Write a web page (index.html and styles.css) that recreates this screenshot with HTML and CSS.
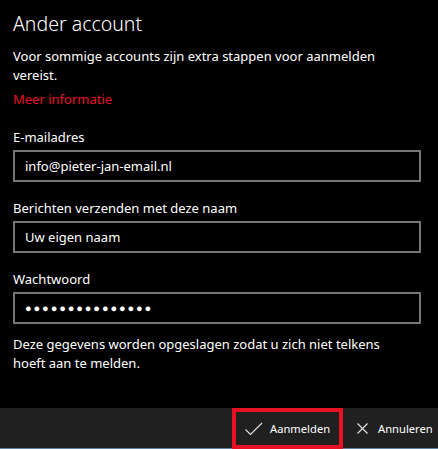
FILE: index.html
```html
<!DOCTYPE html>
<html lang="nl">
<head>
<meta charset="utf-8">
<title>Ander account</title>
<link rel="stylesheet" href="styles.css">
</head>
<body>
<div class="dialog">
  <main class="content">
    <h1 class="title">Ander account</h1>
    <p class="intro">Voor sommige accounts zijn extra stappen voor aanmelden vereist.</p>
    <a class="link" href="#">Meer informatie</a>
    <div class="field">
      <label class="label">E-mailadres</label>
      <div class="input">info@pieter-jan-email.nl</div>
    </div>
    <div class="field">
      <label class="label">Berichten verzenden met deze naam</label>
      <div class="input">Uw eigen naam</div>
    </div>
    <div class="field">
      <label class="label">Wachtwoord</label>
      <div class="input password">●●●●●●●●●●●●●●●</div>
    </div>
    <p class="note">Deze gegevens worden opgeslagen zodat u zich niet telkens hoeft aan te melden.</p>
  </main>
  <footer class="bar">
    <button class="btn btn-primary">
      <svg class="icon" width="18" height="14" viewBox="0 0 18 14"><path d="M0.5 7.5 L5.5 12.5 L17 1" fill="none" stroke="#e6e6e6" stroke-width="1.1"/></svg>
      <span>Aanmelden</span>
    </button>
    <button class="btn btn-cancel">
      <svg class="icon" width="11" height="11" viewBox="0 0 11 11"><path d="M0.5 0.5 L10.5 10.5 M10.5 0.5 L0.5 10.5" fill="none" stroke="#e6e6e6" stroke-width="1.1"/></svg>
      <span>Annuleren</span>
    </button>
  </footer>
</div>
</body>
</html>
```
FILE: styles.css
```css
* { box-sizing: border-box; }
html, body {
  margin: 0;
  padding: 0;
  background: #000;
}
body {
  width: 438px;
  height: 449px;
  overflow: hidden;
  font-family: "Noto Sans", "Open Sans", sans-serif;
  color: #fff;
}
.dialog {
  display: flex;
  flex-direction: column;
  height: 449px;
}
.content {
  flex: 1;
  padding: 10px 17px 0 13px;
  display: flex;
  flex-direction: column;
}
.title {
  margin: 0;
  font-size: 19.5px;
  font-weight: 300;
  line-height: 28px;
  color: #fff;
}
.intro {
  margin: 9px 0 0;
  font-size: 13px;
  line-height: 19px;
}
.link {
  margin-top: 5px;
  font-size: 13px;
  line-height: 19px;
  color: #e81123;
  text-decoration: none;
}
.field {
  display: flex;
  flex-direction: column;
  margin-top: 19px;
}
.field + .field { margin-top: 17px; }
.label {
  font-size: 13px;
  line-height: 19px;
  margin-bottom: 3px;
}
.input {
  height: 32px;
  border: 2px solid #767676;
  padding: 0 10px;
  font-size: 13px;
  line-height: 28px;
  color: #fff;
}
.password {
  font-size: 11px;
  letter-spacing: 1.9px;
}
.note {
  margin: 11px 0 0;
  padding-right: 28px;
  font-size: 13px;
  line-height: 19px;
}
.bar {
  height: 41px;
  background: #202020;
  border-bottom: 1px solid #5f7f9f;
  display: flex;
  justify-content: flex-end;
  align-items: stretch;
}
.btn {
  display: flex;
  align-items: center;
  background: transparent;
  border: none;
  color: #fff;
  font-family: inherit;
  font-size: 11.2px;
  margin: 0;
  white-space: nowrap;
}
.btn-primary {
  width: 111px;
  gap: 7px;
  border: 4px solid #e81123;
  padding: 0 0 0 9px;
  margin-bottom: -1px;
}
.btn-cancel {
  width: 95px;
  gap: 10px;
  padding: 0 0 0 14px;
}
.icon { display: block; flex-shrink: 0; }
```
